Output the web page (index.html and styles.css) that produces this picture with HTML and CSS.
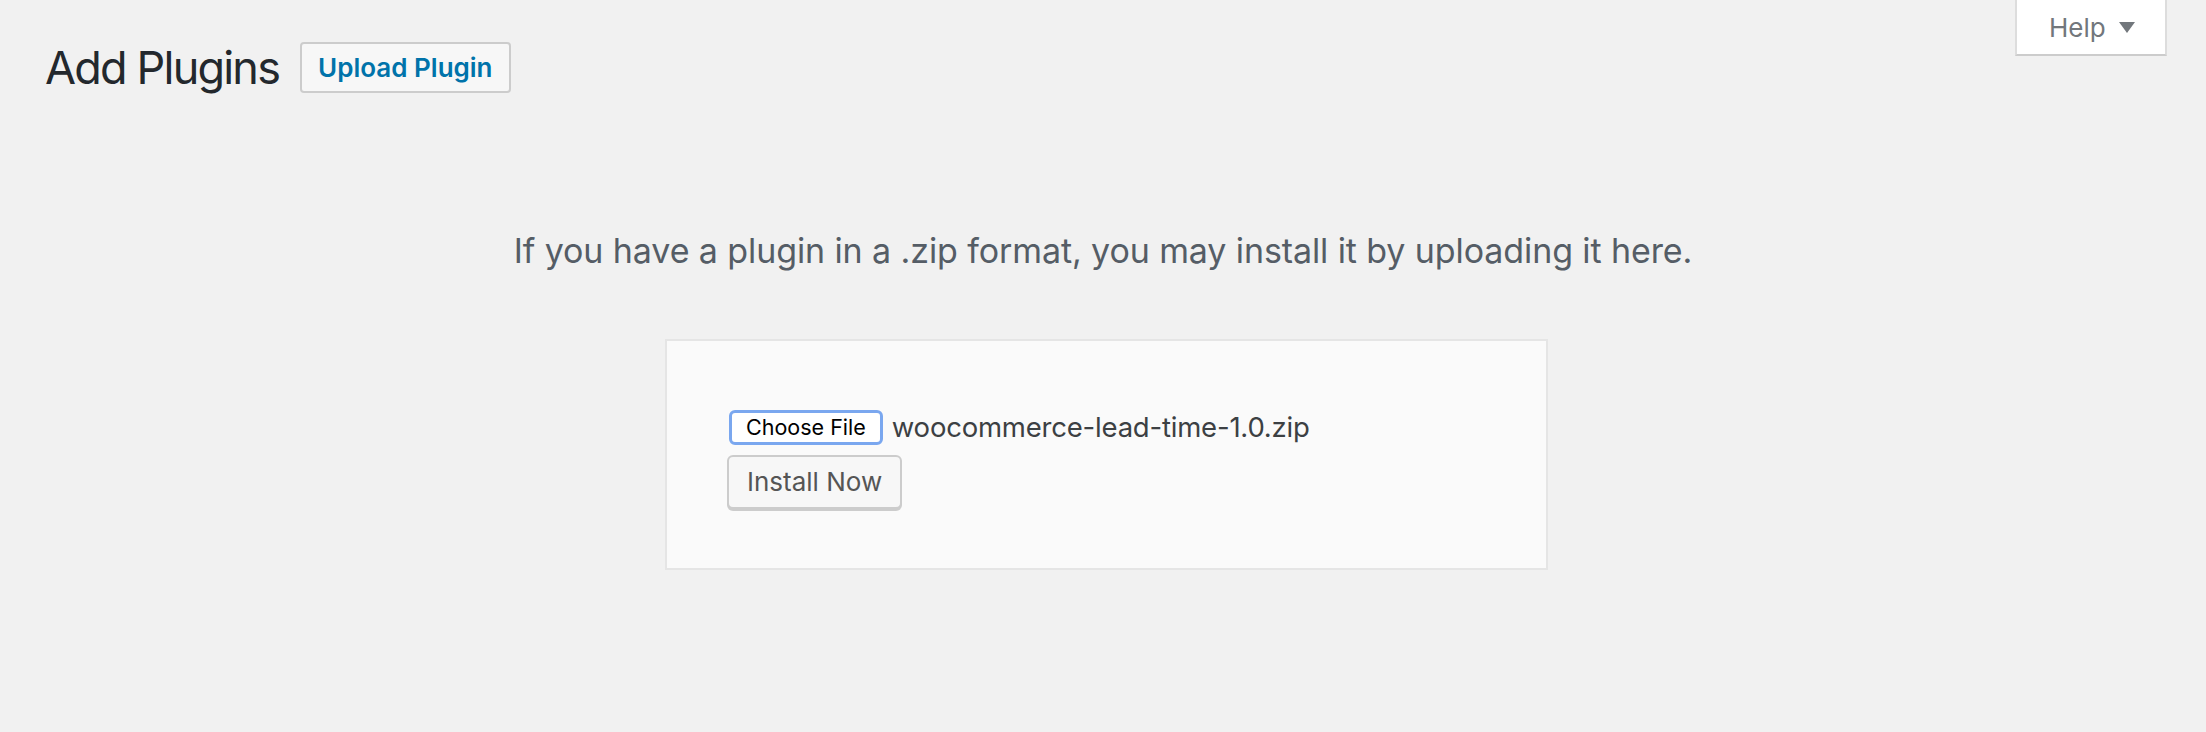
FILE: index.html
```html
<!DOCTYPE html>
<html lang="en">
<head>
<meta charset="utf-8">
<title>Add Plugins</title>
<link rel="stylesheet" href="styles.css">
</head>
<body>
<div class="screen-meta">
  <button class="help-tab" type="button">
    <span class="help-label">Help</span>
    <svg class="help-arrow" width="16" height="11" viewBox="0 0 16 11" aria-hidden="true"><polygon points="0,0 16,0 8,11" fill="#72777c"/></svg>
  </button>
</div>
<div class="wrap">
  <div class="title-row">
    <h1 class="page-title">Add Plugins</h1>
    <a class="page-title-action" href="#">Upload Plugin</a>
  </div>
  <p class="install-help">If you have a plugin in a .zip format, you may install it by uploading it here.</p>
  <form class="upload-form">
    <div class="file-row">
      <span class="choose-file">Choose File</span>
      <span class="file-name">woocommerce-lead-time-1.0.zip</span>
    </div>
    <button class="install-now" type="button">Install Now</button>
  </form>
</div>
</body>
</html>
```

FILE: styles.css
```css
html, body {
  margin: 0;
  padding: 0;
}
body {
  background: #f1f1f1;
  font-family: Inter, "Noto Sans", sans-serif;
  color: #444;
  width: 2206px;
  height: 732px;
  overflow: hidden;
}
.screen-meta {
  float: right;
  margin-right: 39px;
}
.help-tab {
  display: flex;
  align-items: flex-start;
  box-sizing: border-box;
  width: 152px;
  height: 56px;
  margin: 0;
  padding: 12px 0 0 32px;
  background: #fff;
  border: 2px solid #ddd;
  border-top: 0;
  border-bottom-color: #ccc;
  font-family: Inter, "Noto Sans", sans-serif;
  font-size: 26px;
  line-height: 32px;
  color: #72777c;
  cursor: pointer;
}
.help-label {
  display: block;
}
.help-arrow {
  display: block;
  margin: 10px 0 0 13px;
}
.wrap {
  padding: 38px 0 0 45px;
}
.title-row {
  display: flex;
  align-items: flex-start;
}
.page-title {
  margin: 0;
  font-size: 45px;
  font-weight: 400;
  letter-spacing: -1.8px;
  line-height: 60px;
  color: #23282d;
}
.page-title-action {
  display: block;
  box-sizing: border-box;
  height: 51px;
  margin: 4px 0 0 21px;
  padding: 0 16px;
  background: #f7f7f7;
  border: 2px solid #ccc;
  border-radius: 4px;
  font-size: 26px;
  font-weight: 600;
  line-height: 47px;
  color: #0073aa;
  text-decoration: none;
}
.install-help {
  margin: 131px 45px 0 0;
  text-align: center;
  font-size: 34px;
  letter-spacing: -0.1px;
  line-height: 44px;
  color: #555d66;
}
.upload-form {
  box-sizing: border-box;
  width: 883px;
  margin: 66px 0 0 620px;
  padding: 69px 60px 59px 60px;
  background: #fafafa;
  border: 2px solid #e5e5e5;
}
.file-row {
  display: flex;
  align-items: center;
  height: 35px;
}
.choose-file {
  display: block;
  box-sizing: border-box;
  height: 35px;
  padding: 0 14px;
  margin-left: 2px;
  background: #fff;
  border: 3px solid #7aa7ef;
  border-radius: 6px;
  font-size: 21.5px;
  line-height: 29px;
  color: #000;
}
.file-name {
  margin-left: 9px;
  font-size: 27.5px;
  letter-spacing: -0.2px;
  line-height: 35px;
  color: #3c4043;
}
.install-now {
  display: block;
  box-sizing: border-box;
  height: 54px;
  margin: 10px 0 0 0;
  padding: 0 18px;
  background: #f7f7f7;
  border: 2px solid #ccc;
  border-radius: 6px;
  box-shadow: 0 2px 0 #ccc;
  font-family: Inter, "Noto Sans", sans-serif;
  font-size: 26px;
  line-height: 50px;
  color: #555;
}
```
